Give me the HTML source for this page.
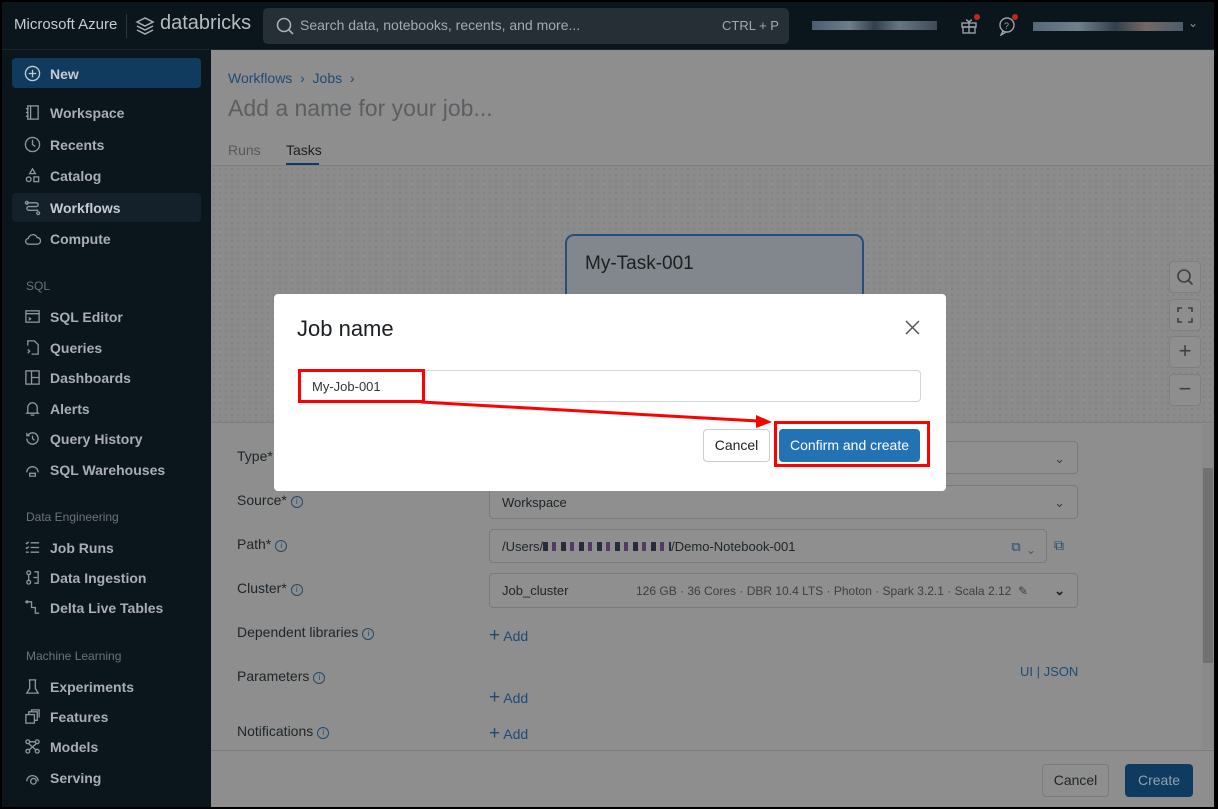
<!DOCTYPE html>
<html><head><meta charset="utf-8"><style>
*{box-sizing:border-box;margin:0;padding:0}
body{width:1218px;height:809px;overflow:hidden;background:#000;font-family:"Liberation Sans",sans-serif;position:relative}
.abs{position:absolute}
#top{left:2px;top:2px;width:1212px;height:48px;background:#0b151c;border-bottom:1px solid #1a242b}
#side{left:2px;top:50px;width:209px;height:757px;background:#0b151c}
#main{left:211px;top:50px;width:1003px;height:757px;background:#8e8e8e;overflow:hidden}
.nav{position:absolute;left:22px;font-size:14px;font-weight:bold;color:#a9aeb3;display:flex;align-items:center;gap:9px}
.nav svg{width:17px;height:17px;stroke:#8f959a;fill:none;stroke-width:1.4}
.sec{position:absolute;left:24px;font-size:12px;color:#6d7378}
.lbl{position:absolute;left:26px;font-size:14px;color:#1e2428}
.fld{position:absolute;left:278px;width:589px;height:34px;border:1px solid #7a7a7a;border-radius:4px;background:#8f8f8f;font-size:13px;color:#1e2428;padding:9px 12px}
.info{display:inline-block;width:12px;height:12px;border:1px solid #244a6c;border-radius:50%;font-size:8px;text-align:center;line-height:10px;color:#244a6c;margin-left:4px;vertical-align:1px}
.add{position:absolute;left:278px;font-size:14px;color:#1e4b74}
.zb{position:absolute;left:958px;width:32px;height:32px;border:1px solid #7f7f7f;border-radius:4px;background:#8e8e8e;color:#3b3f42;text-align:center;font-size:22px;line-height:28px}
</style></head><body>
<div id="top" class="abs">
 <div class="abs" style="left:12px;top:14px;font-size:15px;color:#c8ccd0">Microsoft Azure</div>
 <div class="abs" style="left:124px;top:12px;width:1px;height:24px;background:#2b353c"></div>
 <svg class="abs" style="left:133px;top:13px" width="20" height="22" viewBox="0 0 20 22" fill="none" stroke="#a9aeb3" stroke-width="1.5"><path d="M2 7l8-4 8 4-8 4z"/><path d="M2 11l8 4 8-4"/><path d="M2 15l8 4 8-4"/></svg>
 <div class="abs" style="left:158px;top:10px;font-size:20px;color:#b7bbbf">databricks</div>
 <div class="abs" style="left:261px;top:6px;width:526px;height:36px;background:#262f36;border-radius:5px"></div>
 <svg class="abs" style="left:274px;top:15px" width="18" height="18" fill="none" stroke="#a9aeb3" stroke-width="1.6"><circle cx="8" cy="8" r="6.5"/><path d="M13 13l4 4"/></svg>
 <div class="abs" style="left:298px;top:15px;font-size:14px;color:#a4a9ae">Search data, notebooks, recents, and more...</div>
 <div class="abs" style="left:720px;top:16px;font-size:13px;color:#a4a9ae">CTRL + P</div>
 <div class="abs" style="left:810px;top:19px;width:125px;height:9px;background:linear-gradient(90deg,#5a6f85,#8898a8 30%,#3d4a58 50%,#7d8e9c 70%,#4b5864);opacity:.8"></div>
 <svg class="abs" style="left:957px;top:14px" width="20" height="20" fill="none" stroke="#9aa0a5" stroke-width="1.4"><rect x="3" y="7" width="14" height="4"/><rect x="4" y="11" width="12" height="6"/><path d="M10 7v10M7 4c2 0 3 3 3 3s1-3 3-3"/></svg>
 <div class="abs" style="left:972px;top:12px;width:6px;height:6px;border-radius:50%;background:#c0281d"></div>
 <svg class="abs" style="left:995px;top:14px" width="20" height="20" fill="none" stroke="#9aa0a5" stroke-width="1.4"><circle cx="10" cy="9" r="7"/><path d="M6 15l-2 4 5-3"/><text x="7" y="13" font-size="9" fill="#9aa0a5" stroke="none">?</text></svg>
 <div class="abs" style="left:1010px;top:12px;width:6px;height:6px;border-radius:50%;background:#c0281d"></div>
 <div class="abs" style="left:1031px;top:20px;width:150px;height:9px;background:linear-gradient(90deg,#6a7d90,#8a9aa9 30%,#3d4a58 55%,#8d7d74 75%,#5c6f80);opacity:.8"></div>
 <div class="abs" style="left:1186px;top:14px;font-size:12px;color:#8f959a">⌄</div>
</div>
<div id="side" class="abs">
 <div class="abs" style="left:10px;top:8px;width:189px;height:30px;background:#103b5f;border-radius:4px"></div>
 <div class="nav" style="top:15px;color:#c5cbd1"><svg viewBox="0 0 18 18" style="stroke:#c5cbd1"><circle cx="9" cy="9" r="7.5"/><path d="M9 5v8M5 9h8"/></svg>New</div>
 <div class="nav" style="top:54px"><svg viewBox="0 0 18 18"><rect x="4" y="2" width="11" height="14"/><path d="M7 2v14M2 5h3M2 9h3M2 13h3"/></svg>Workspace</div>
 <div class="nav" style="top:86px"><svg viewBox="0 0 18 18"><circle cx="9" cy="9" r="7.5"/><path d="M9 4v5l3 2"/></svg>Recents</div>
 <div class="nav" style="top:117px"><svg viewBox="0 0 18 18"><path d="M9 2l3 5H6z"/><circle cx="5" cy="13" r="2.5"/><rect x="10.5" y="10.5" width="5" height="5"/></svg>Catalog</div>
 <div class="abs" style="left:10px;top:143px;width:189px;height:29px;background:#15212a;border-radius:4px"></div>
 <div class="nav" style="top:149px;color:#c5cbd1"><svg viewBox="0 0 18 18"><path d="M3 4h10a2 2 0 010 4H5a2 2 0 000 4h10"/><circle cx="3" cy="4" r="1.5"/><circle cx="15" cy="15" r="1.5"/></svg>Workflows</div>
 <div class="nav" style="top:180px"><svg viewBox="0 0 18 18"><path d="M5 15h9a3.5 3.5 0 000-7 5 5 0 00-9.5 1A3 3 0 005 15z"/></svg>Compute</div>
 <div class="sec" style="top:229px">SQL</div>
 <div class="nav" style="top:258px"><svg viewBox="0 0 18 18"><rect x="2" y="3" width="14" height="12"/><path d="M2 6h14M5 10l2 1.5L5 13"/></svg>SQL Editor</div>
 <div class="nav" style="top:289px"><svg viewBox="0 0 18 18"><path d="M4 7V2h7l4 4v10H8M4 11l2 2-2 2"/></svg>Queries</div>
 <div class="nav" style="top:319px"><svg viewBox="0 0 18 18"><rect x="2" y="2" width="14" height="14"/><path d="M8 2v14M8 9h8"/></svg>Dashboards</div>
 <div class="nav" style="top:350px"><svg viewBox="0 0 18 18"><path d="M4 13V8a5 5 0 0110 0v5l1 1H3zM7 16h4"/></svg>Alerts</div>
 <div class="nav" style="top:380px"><svg viewBox="0 0 18 18"><path d="M3 9a6 6 0 106-6 6 6 0 00-5 3M3 3v3h3M9 6v3l2 2"/></svg>Query History</div>
 <div class="nav" style="top:411px"><svg viewBox="0 0 18 18"><path d="M3 12a6 6 0 0112 0M6 13h6v3H6z"/></svg>SQL Warehouses</div>
 <div class="sec" style="top:460px">Data Engineering</div>
 <div class="nav" style="top:489px"><svg viewBox="0 0 18 18"><path d="M7 4h9M7 9h9M7 14h9M2 4l1 1 2-2M2 9l1 1 2-2M2 14h3"/></svg>Job Runs</div>
 <div class="nav" style="top:519px"><svg viewBox="0 0 18 18"><circle cx="5" cy="4" r="2"/><circle cx="5" cy="14" r="2"/><path d="M5 6v6M11 3h4v12h-4M10 9h4"/></svg>Data Ingestion</div>
 <div class="nav" style="top:549px"><svg viewBox="0 0 18 18"><path d="M3 3h5v6h4v6h4"/><circle cx="3" cy="3" r="1"/></svg>Delta Live Tables</div>
 <div class="sec" style="top:599px">Machine Learning</div>
 <div class="nav" style="top:628px"><svg viewBox="0 0 18 18"><path d="M6 2v9l-3 5h12l-3-5V2M5 2h8"/></svg>Experiments</div>
 <div class="nav" style="top:658px"><svg viewBox="0 0 18 18"><rect x="2" y="7" width="9" height="9"/><path d="M5 7V4h9v9h-3M8 4V2h8v8"/></svg>Features</div>
 <div class="nav" style="top:688px"><svg viewBox="0 0 18 18"><circle cx="4" cy="4" r="2"/><circle cx="14" cy="4" r="2"/><circle cx="4" cy="14" r="2"/><circle cx="14" cy="14" r="2"/><path d="M6 4h6M5 6l8 7M13 6l-8 7"/></svg>Models</div>
 <div class="nav" style="top:719px"><svg viewBox="0 0 18 18"><path d="M3 13a6 6 0 0112 0"/><circle cx="10" cy="13" r="3"/></svg>Serving</div>
</div>
<div id="main" class="abs">
 <div class="abs" style="left:17px;top:20px;font-size:14px;color:#1e4b74">Workflows &nbsp;›&nbsp; Jobs &nbsp;›</div>
 <div class="abs" style="left:17px;top:45px;font-size:23px;color:#5b5f62">Add a name for your job...</div>
 <div class="abs" style="left:17px;top:92px;font-size:14px;color:#55595c">Runs</div>
 <div class="abs" style="left:75px;top:92px;font-size:14px;color:#1b1f22">Tasks</div>
 <div class="abs" style="left:75px;top:113px;width:33px;height:3px;background:#103b60"></div>
 <div class="abs" style="left:0;top:115px;width:1003px;height:1px;background:#7f7f7f"></div>
 <div class="abs" style="left:0;top:116px;width:1003px;height:256px;background-color:#8b8b8b;background-image:radial-gradient(#808080 0.8px,transparent 1px);background-size:6px 6px"></div>
 <div class="abs" style="left:354px;top:184px;width:299px;height:110px;border:2px solid #244f78;border-radius:9px;background:#81878c"></div>
 <div class="abs" style="left:374px;top:203px;font-size:19px;color:#1b1f22">My-Task-001</div>
 <div class="zb" style="top:211px"><svg width="18" height="18" fill="none" stroke="#3b3f42" stroke-width="1.6" style="margin-top:6px"><circle cx="8" cy="8" r="6"/><path d="M12.5 12.5l4 4"/></svg></div>
 <div class="zb" style="top:249px"><svg width="16" height="16" fill="none" stroke="#3b3f42" stroke-width="1.6" style="margin-top:7px"><path d="M1 5V1h4M11 1h4v4M15 11v4h-4M5 15H1v-4"/></svg></div>
 <div class="zb" style="top:286px">+</div>
 <div class="zb" style="top:324px">−</div>
 <div class="abs" style="left:0;top:372px;width:1003px;height:1px;background:#7f7f7f"></div>
 <div class="abs" style="left:991px;top:374px;width:12px;height:325px;background:#8a8a8a"></div>
 <div class="abs" style="left:992px;top:418px;width:10px;height:195px;background:#717171"></div>
 <div class="lbl" style="top:398px">Type*</div>
 <div class="fld" style="top:391px;height:33px"><span style="float:right;color:#3b3f42">⌄</span></div>
 <div class="lbl" style="top:442px">Source*<span class="info">i</span></div>
 <div class="fld" style="top:435px">Workspace<span style="float:right;color:#3b3f42">⌄</span></div>
 <div class="lbl" style="top:486px">Path*<span class="info">i</span></div>
 <div class="fld" style="top:479px;width:558px">/Users/<span style="display:inline-block;width:128px;height:9px;background:repeating-linear-gradient(90deg,#2a2a3a 0 5px,#8f8f8f 5px 9px,#553a66 9px 13px,#8f8f8f 13px 18px)"></span>/Demo-Notebook-001<span style="float:right;color:#1e4b74">⧉ &nbsp;<span style="color:#3b3f42">⌄</span></span></div>
 <div class="abs" style="left:843px;top:487px;font-size:14px;color:#1e4b74">⧉</div>
 <div class="lbl" style="top:530px">Cluster*<span class="info">i</span></div>
 <div class="fld" style="top:523px;height:35px">Job_cluster<span style="position:absolute;left:146px;top:10px;font-size:12px;color:#3b3f42">126 GB · 36 Cores · DBR 10.4 LTS · Photon · Spark 3.2.1 · Scala 2.12 &nbsp;✎</span><span style="float:right;color:#1b1f22;font-weight:bold">⌄</span></div>
 <div class="lbl" style="top:574px">Dependent libraries<span class="info">i</span></div>
 <div class="add" style="top:575px"><b style="font-size:19px;font-weight:normal">+</b> Add</div>
 <div class="lbl" style="top:618px">Parameters<span class="info">i</span></div>
 <div class="abs" style="left:809px;top:614px;font-size:13px;color:#1e4b74">UI | JSON</div>
 <div class="add" style="top:637px"><b style="font-size:19px;font-weight:normal">+</b> Add</div>
 <div class="lbl" style="top:673px">Notifications<span class="info">i</span></div>
 <div class="add" style="top:673px"><b style="font-size:19px;font-weight:normal">+</b> Add</div>
 <div class="abs" style="left:0;top:700px;width:1003px;height:1px;background:#7a7a7a"></div>
 <div class="abs" style="left:831px;top:714px;width:67px;height:33px;border:1px solid #7a7a7a;border-radius:4px;font-size:14px;color:#1e2428;text-align:center;line-height:31px">Cancel</div>
 <div class="abs" style="left:914px;top:714px;width:68px;height:33px;background:#103b60;border-radius:4px;font-size:14px;color:#8fa0b0;text-align:center;line-height:33px">Create</div>
</div>
<!-- modal -->
<div class="abs" style="left:274px;top:294px;width:672px;height:197px;background:#fff;border-radius:4px">
 <div class="abs" style="left:23px;top:22px;font-size:22px;color:#1b1f22">Job name</div>
 <svg class="abs" style="left:631px;top:26px" width="15" height="15" stroke="#555" stroke-width="1.5"><path d="M1 1l13 13M14 1L1 14"/></svg>
 <div class="abs" style="left:24px;top:76px;width:623px;height:32px;border:1px solid #d0d7de;border-radius:4px;font-size:13px;color:#333;padding:8px 13px">My-Job-001</div>
 <div class="abs" style="left:429px;top:135px;width:67px;height:33px;border:1px solid #c8ced3;border-radius:4px;font-size:14px;color:#1b1f22;text-align:center;line-height:31px">Cancel</div>
 <div class="abs" style="left:505px;top:135px;width:141px;height:33px;background:#2272b4;border-radius:4px;font-size:14px;color:#fff;text-align:center;line-height:33px">Confirm and create</div>
</div>
<div class="abs" style="left:298px;top:369px;width:127px;height:34px;border:3px solid #f00"></div>
<div class="abs" style="left:774px;top:421px;width:156px;height:46px;border:3px solid #f00"></div>
<svg class="abs" style="left:0;top:0" width="1218" height="809"><path d="M421 402L758 421" stroke="#f00" stroke-width="3"/><path d="M772 422l-16-7v13z" fill="#f00"/></svg>
</body></html>
